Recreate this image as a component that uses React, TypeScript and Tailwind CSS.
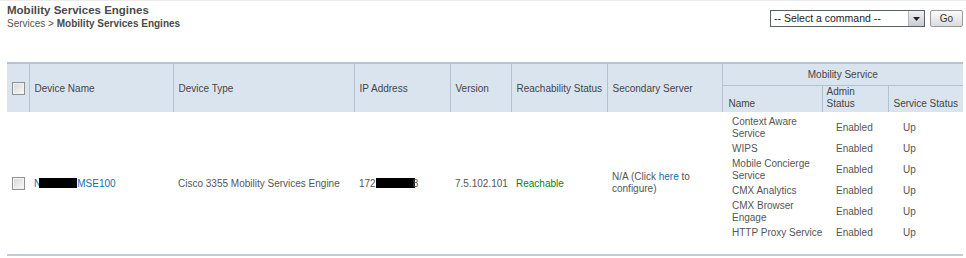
import React from "react";

type Service = {
  name: string[];
  admin: string;
  status: string;
};

const services: Service[] = [
  { name: ["Context Aware", "Service"], admin: "Enabled", status: "Up" },
  { name: ["WIPS"], admin: "Enabled", status: "Up" },
  { name: ["Mobile Concierge", "Service"], admin: "Enabled", status: "Up" },
  { name: ["CMX Analytics"], admin: "Enabled", status: "Up" },
  { name: ["CMX Browser", "Engage"], admin: "Enabled", status: "Up" },
  { name: ["HTTP Proxy Service"], admin: "Enabled", status: "Up" },
];

function Check() {
  return (
    <span className="block w-[13px] h-[13px] border border-[#8e8f8f] bg-gradient-to-br from-[#d6d6d6] to-[#fafafa] shadow-[inset_0_0_0_1px_#f4f4f4]" />
  );
}

export default function App() {
  const th =
    "border-r border-[#b3c2d2] px-[5px] text-left font-normal align-middle whitespace-nowrap";
  return (
    <div
      className="w-[966px] h-[258px] bg-white text-[10px] text-[#555] border-t border-[#ececec]"
      style={{ fontFamily: '"Liberation Sans", Arial, sans-serif' }}
    >
      {/* Page header */}
      <div className="flex justify-between pl-[7px] pr-[3px] pt-[2px]">
        <div>
          <h1 className="text-[11.5px] font-bold text-[#4a4a4a] leading-[14px]">
            Mobility Services Engines
          </h1>
          <p className="text-[10px] leading-[13px] text-[#555]">
            Services &gt; <span className="font-bold text-[#4a4a4a]">Mobility Services Engines</span>
          </p>
        </div>
        <div className="flex items-start gap-[5px] pt-[7px]">
          <div className="flex w-[155px] h-[17px] border border-[#5a6066] bg-white">
            <span className="flex-1 pl-[3px] leading-[15px] text-[10.5px] text-[#222]">
              -- Select a command --
            </span>
            <span className="w-[16px] h-[15px] bg-gradient-to-b from-[#eef0f2] to-[#c9ccd0] border-l border-[#b0b4b8] flex items-center justify-center">
              <svg width="7" height="4" viewBox="0 0 7 4">
                <path d="M0 0h7L3.5 4z" fill="#222" />
              </svg>
            </span>
          </div>
          <button className="w-[33px] h-[17px] rounded-[2px] border border-[#9a9a9a] bg-gradient-to-b from-[#fbfbfb] to-[#dcdcdc] text-[10px] text-[#333] leading-[15px]">
            Go
          </button>
        </div>
      </div>

      {/* Table */}
      <table className="ml-[7px] mt-[32px] w-[956px] table-fixed border-collapse">
        <colgroup>
          <col className="w-[22px]" />
          <col className="w-[144px]" />
          <col className="w-[181px]" />
          <col className="w-[96px]" />
          <col className="w-[61px]" />
          <col className="w-[96px]" />
          <col className="w-[115px]" />
          <col className="w-[100px]" />
          <col className="w-[66px]" />
          <col className="w-[75px]" />
        </colgroup>
        <thead className="bg-[#dae4ef] text-[#444]">
          <tr className="h-[22px] border-t-2 border-[#b6c3d1]">
            <th rowSpan={2} className="border-r border-[#b3c2d2] pl-[5px] align-middle">
              <Check />
            </th>
            <th rowSpan={2} className={th}>Device Name</th>
            <th rowSpan={2} className={th}>Device Type</th>
            <th rowSpan={2} className={th}>IP Address</th>
            <th rowSpan={2} className={th}>Version</th>
            <th rowSpan={2} className={th}>Reachability Status</th>
            <th rowSpan={2} className={th}>Secondary Server</th>
            <th colSpan={3} className="font-normal text-center border-b border-[#b3c2d2]">
              Mobility Service
            </th>
          </tr>
          <tr className="h-[27px]">
            <th className="border-r border-[#b3c2d2] px-[6px] pb-[2px] text-left font-normal align-bottom leading-[12px]">
              Name
            </th>
            <th className="border-r border-[#b3c2d2] px-[4px] pb-[2px] text-left font-normal align-bottom leading-[12px]">
              Admin
              <br />
              Status
            </th>
            <th className="px-[5px] pb-[2px] text-left font-normal align-bottom leading-[12px] whitespace-nowrap">
              Service Status
            </th>
          </tr>
        </thead>
        <tbody>
          <tr className="border-b-2 border-[#c3ccd6]">
            <td className="pl-[5px] align-middle">
              <Check />
            </td>
            <td className="px-[5px] align-middle text-[#0b72b5]">
              <span className="inline-flex items-center">
                N
                <span className="inline-block w-[38px] h-[10px] bg-black -ml-[2px]" />
                MSE100
              </span>
            </td>
            <td className="px-[5px] align-middle whitespace-nowrap">Cisco 3355 Mobility Services Engine</td>
            <td className="px-[5px] align-middle">
              <span className="inline-flex items-center">
                172
                <span className="inline-block w-[39px] h-[10px] bg-black" />
                <span className="-ml-[2px]">8</span>
              </span>
            </td>
            <td className="px-[5px] align-middle">7.5.102.101</td>
            <td className="px-[5px] align-middle text-[#0a7f0a]">Reachable</td>
            <td className="px-[5px] align-middle leading-[12px]">
              N/A (Click <span className="text-[#0b72b5]">here</span> to
              <br />
              configure)
            </td>
            <td colSpan={3} className="pt-[4px] pb-[12px] align-top">
              <div className="grid grid-cols-[100px_66px_75px] leading-[12px]">
                {services.map((s) => (
                  <React.Fragment key={s.name.join(" ")}>
                    <div className="pl-[10px] min-h-[18px] flex flex-col justify-center whitespace-nowrap">
                      {s.name.map((l) => (
                        <span key={l}>{l}</span>
                      ))}
                    </div>
                    <div className="pl-[14px] flex items-center">{s.admin}</div>
                    <div className="pl-[15px] flex items-center">{s.status}</div>
                  </React.Fragment>
                ))}
              </div>
            </td>
          </tr>
        </tbody>
      </table>
    </div>
  );
}
